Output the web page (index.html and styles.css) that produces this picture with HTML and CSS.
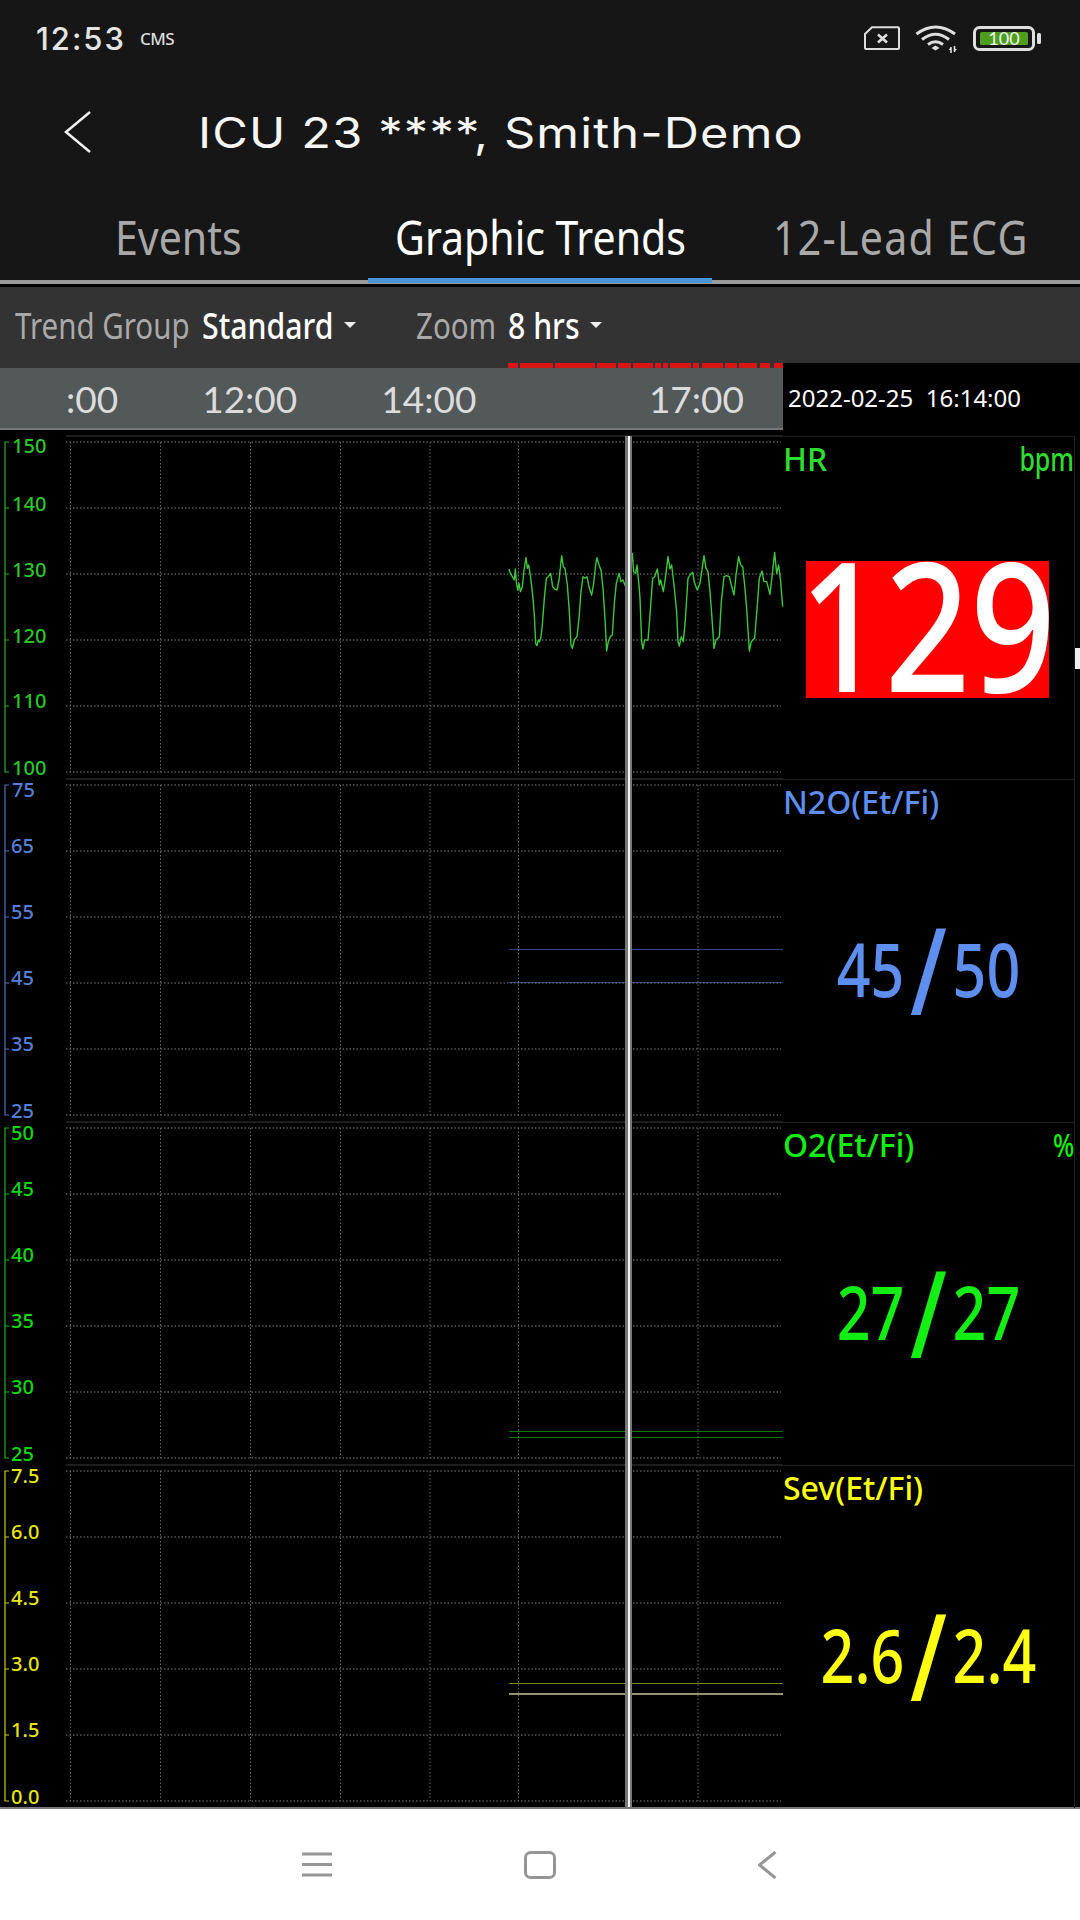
FILE: index.html
```html
<!DOCTYPE html>
<html lang="en">

<head>
    <meta charset="UTF-8">
    <meta name="viewport" content="width=device-width, initial-scale=1.0">
    <title>Graphic Trends</title>
    <link rel="stylesheet" href="styles.css">
</head>

<body>
    <div class="screen">
        <div class="status-bar">
            <span class="clock">12:53</span>
            <span class="carrier">CMS</span>
            <div class="status-icons">
                <svg width="36" height="24" viewBox="0 0 36 24" class="icon-line">
                    <path d="M8 1.2H34a1 1 0 0 1 1 1V22a1 1 0 0 1-1 1H2a1 1 0 0 1-1-1V8z" />
                    <path d="M14 8.5l9 8M23 8.5l-9 8" class="icon-x" />
                </svg>
                <svg width="43" height="29" viewBox="0 0 43 29" class="icon-line">
                    <path d="M1.5 10Q20.5-4 40 10" class="icon-wifi" />
                    <path d="M7 15.5Q20.5 5 34 15.5" class="icon-wifi" />
                    <path d="M13 20.5Q20.5 15 28 20.5" class="icon-wifi" />
                    <path d="M16.5 24l4-2.5 4 2.5-4 2.5z" class="icon-fill" />
                    <path d="M36 23v6M39.5 22v6" class="icon-arrows" />
                    <path d="M36 23l-2.5 3h2.500zM39.500 28l2.500-3h-2.500z" class="icon-fill" />
                </svg>
                <svg width="68" height="25" viewBox="0 0 68 25" class="icon-line">
                    <rect x="1.500" y="1.500" width="59" height="22" rx="5" class="icon-shell" />
                    <rect x="7" y="6" width="48" height="13" rx="1.500" class="battery-level" />
                    <text x="31" y="18.500" class="battery-text">100</text>
                    <rect x="64" y="7" width="4" height="11" rx="1.500" class="icon-fill" />
                </svg>
            </div>
        </div>

        <div class="app-header">
            <svg width="27" height="44" viewBox="0 0 27 44" class="back-icon">
                <path d="M26 2L2 22l24 20" />
            </svg>
            <h1 class="app-title">ICU 23 ****, Smith-Demo</h1>
        </div>

        <div class="tabs">
            <div class="tab tab-events"><span class="narrow">Events</span></div>
            <div class="tab tab-trends active"><span class="narrow">Graphic Trends</span></div>
            <div class="tab tab-ecg"><span class="narrow">12-Lead ECG</span></div>
        </div>

        <div class="toolbar">
            <div class="picker picker-group">
                <span class="picker-name narrow">Trend Group</span>
                <span class="picker-value narrow">Standard</span>
                <span class="caret"></span>
            </div>
            <div class="picker picker-zoom">
                <span class="picker-name narrow">Zoom</span>
                <span class="picker-value narrow">8 hrs</span>
                <span class="caret"></span>
            </div>
        </div>

        <div class="time-row">
            <div class="time-col">
                <div class="data-strip">
                    <svg width="275" height="5" viewBox="0 0 275 5" class="strip-bars">
                        <path d="M0 0h10v5H0zM12 0h33v5H12zM47 0h40v5H47zM89 0h19v5H89zM110 0h13v5H110zM125 0h20v5H125zM147 0h6v5H147zM155 0h5v5H155zM162 0h21v5H162zM185 0h6v5H185zM194 0h21v5H194zM217 0h12v5H217zM231 0h18v5H231zM252 0h10v5H252zM266 0h9v5H266z" />
                    </svg>
                </div>
                <div class="time-bar">
                    <span>:00</span>
                    <span>12:00</span>
                    <span>14:00</span>
                    <span class="time-last">17:00</span>
                </div>
            </div>
            <div class="cursor-time"><span>2022-02-25&nbsp; 16:14:00</span></div>
        </div>

        <div class="panels">
            <div class="panel panel-hr">
                <svg width="783" height="343" viewBox="0 0 783 343" class="chart">
                    <defs>
                        <g id="grid">
                            <path d="M66 0H783" class="chart-sep" />
                            <path d="M66 6H781M66 72H781M66 138H781M66 204H781M66 270H781M66 336H781" class="chart-grid" />
                            <path d="M70.500 6V336M160.500 6V336M250.500 6V336M340.500 6V336M430 6V336M518.500 6V336M698 6V336" class="chart-grid chart-grid-v" />
                            <path d="M9 6H5V336H9M5 72H9M5 138H9M5 204H9M5 270H9" class="chart-axis" />
                        </g>
                    </defs>
                    <use href="#grid" />
                    <text x="12" y="17" class="axis-text">150</text>
                    <text x="12" y="75" class="axis-text">140</text>
                    <text x="12" y="141" class="axis-text">130</text>
                    <text x="12" y="207" class="axis-text">120</text>
                    <text x="12" y="272" class="axis-text">110</text>
                    <text x="12" y="339" class="axis-text">100</text>
                    <g transform="translate(505 109) scale(.3333)">
                        <polyline class="hr-trace" points="12,72 16,85 22,95 28,105 31,72 34,110 38,135 42,115 46,140 52,125 57,75 63,38 67,70 71,60 76,90 82,140 88,210 92,295 96,302 100,285 104,290 108,275 112,240 118,160 124,100 130,95 137,85 143,125 150,133 156,135 162,105 170,32 175,65 180,70 187,120 193,200 198,300 202,310 208,285 216,275 222,220 228,140 234,95 240,100 246,95 252,125 260,150 266,115 272,60 276,38 282,60 288,75 294,130 300,220 305,318 310,290 316,275 322,270 328,175 334,115 342,85 348,110 354,105 362,125 368,145 374,95 382,25 386,80 392,85 396,60 402,120 405,160" />
                    </g>
                    <g transform="translate(640 109) scale(.3333)">
                        <polyline class="hr-trace" points="0,160 5,290 9,312 14,285 24,285 30,210 38,100 44,95 52,72 58,120 62,105 70,140 76,100 84,35 90,72 95,60 102,120 110,200 114,290 118,303 124,275 130,290 136,225 144,100 150,90 158,82 164,115 172,135 180,115 192,32 198,70 204,80 210,140 216,220 222,310 228,285 238,275 244,170 252,95 260,92 268,95 274,120 282,150 288,90 296,35 302,60 308,65 314,120 320,190 328,318 334,290 344,280 352,180 358,100 366,78 372,110 380,110 390,148 396,95 404,22 410,85 416,60 422,110 428,185" />
                    </g>
                </svg>
                <div class="readout">
                    <div class="readout-head"><span>HR</span><span class="unit">bpm</span></div>
                    <div class="alarm-box"><span class="alarm-value">129</span></div>
                    <div class="scroll-thumb"></div>
                </div>
            </div>

            <div class="panel panel-n2o">
                <svg width="783" height="343" viewBox="0 0 783 343" class="chart">
                    <use href="#grid" />
                    <text x="12" y="18" class="axis-text">75</text>
                    <text x="11" y="74" class="axis-text">65</text>
                    <text x="11" y="140" class="axis-text">55</text>
                    <text x="11" y="206" class="axis-text">45</text>
                    <text x="11" y="272" class="axis-text">35</text>
                    <text x="11" y="339" class="axis-text">25</text>
                    <path d="M509 170.500H783M509 203.500H783" class="trend-line" />
                </svg>
                <div class="readout">
                    <div class="readout-head"><span>N2O(Et/Fi)</span></div>
                    <div class="value"><span>45</span><span class="slash">/</span><span>50</span></div>
                </div>
            </div>

            <div class="panel panel-o2">
                <svg width="783" height="343" viewBox="0 0 783 343" class="chart">
                    <use href="#grid" />
                    <text x="11" y="18" class="axis-text">50</text>
                    <text x="11" y="74" class="axis-text">45</text>
                    <text x="11" y="140" class="axis-text">40</text>
                    <text x="11" y="206" class="axis-text">35</text>
                    <text x="11" y="272" class="axis-text">30</text>
                    <text x="11" y="339" class="axis-text">25</text>
                    <path d="M509 309.500H783M509 315.500H783" class="trend-line" />
                </svg>
                <div class="readout">
                    <div class="readout-head"><span>O2(Et/Fi)</span><span class="unit">%</span></div>
                    <div class="value"><span>27</span><span class="slash">/</span><span>27</span></div>
                </div>
            </div>

            <div class="panel panel-sev">
                <svg width="783" height="343" viewBox="0 0 783 343" class="chart">
                    <use href="#grid" />
                    <text x="11" y="18" class="axis-text">7.5</text>
                    <text x="11" y="74" class="axis-text">6.0</text>
                    <text x="11" y="140" class="axis-text">4.5</text>
                    <text x="11" y="206" class="axis-text">3.0</text>
                    <text x="11" y="272" class="axis-text">1.5</text>
                    <text x="11" y="339" class="axis-text">0.0</text>
                    <path d="M509 218.500H783" class="trend-line" />
                    <path d="M509 229H783" class="trend-line trend-line-fi" />
                </svg>
                <div class="readout">
                    <div class="readout-head"><span>Sev(Et/Fi)</span></div>
                    <div class="value"><span>2.6</span><span class="slash">/</span><span>2.4</span></div>
                </div>
            </div>

            <div class="cursor-line"></div>
        </div>

        <div class="nav-bar">
            <svg width="30" height="25" viewBox="0 0 30 25" class="nav-icon nav-menu">
                <path d="M0 2h30M0 12.500h30M0 23h30" />
            </svg>
            <svg width="32" height="28" viewBox="0 0 32 28" class="nav-icon nav-home">
                <rect x="1.500" y="1.500" width="29" height="25" rx="5" />
            </svg>
            <svg width="19" height="28" viewBox="0 0 19 28" class="nav-icon nav-back">
                <path d="M17.500 1L1.500 14l16 13" />
            </svg>
        </div>
    </div>
</body>

</html>
```

FILE: styles.css
```css
* {
    box-sizing: border-box;
}

body {
    margin: 0;
    font-family: "Noto Sans", sans-serif;
    background-color: #000;
}

.screen {
    display: flex;
    flex-direction: column;
    width: 1080px;
    height: 1920px;
    overflow: hidden;
}

.narrow {
    display: inline-block;
    white-space: nowrap;
    transform-origin: left center;
}

/* status bar */
.status-bar {
    display: flex;
    align-items: center;
    height: 66px;
    padding: 10px 39px 0 36px;
    background-color: #161616;
    color: #e4e4e4;
}

.clock {
    font-family: Inter, sans-serif;
    font-size: 31px;
    font-weight: 500;
    letter-spacing: 2px;
}

.carrier {
    margin-left: 14px;
    font-size: 17px;
    font-weight: 500;
    letter-spacing: -0.6px;
    color: #dcdcdc;
}

.status-icons {
    display: flex;
    align-items: center;
    gap: 15px;
    margin-left: auto;
}

.icon-line {
    fill: none;
    stroke: #dedede;
    stroke-width: 2;
}

.icon-x {
    stroke-width: 2.6;
}

.icon-wifi {
    stroke-width: 3;
}

.icon-arrows {
    stroke-width: 1.6;
}

.icon-shell {
    stroke-width: 3;
}

.icon-fill {
    fill: #dedede;
    stroke: none;
}

.battery-level {
    fill: #4c9e1c;
    stroke: none;
}

.battery-text {
    fill: #f2f2f2;
    stroke: none;
    font-family: Lato, sans-serif;
    font-size: 18px;
    text-anchor: middle;
}

/* title */
.app-header {
    display: flex;
    align-items: center;
    height: 132px;
    padding-left: 64px;
    background-color: #161616;
}

.back-icon {
    fill: none;
    stroke: #f2f2f2;
    stroke-width: 2.5;
}

.app-title {
    margin: 0 0 0 107px;
    font-family: Inter, sans-serif;
    font-size: 42px;
    font-weight: 400;
    letter-spacing: 1px;
    color: #f5f5f5;
    white-space: nowrap;
    transform: scaleX(1.16);
    transform-origin: left center;
}

/* tabs */
.tabs {
    display: flex;
    height: 86px;
    background-color: #161616;
    border-bottom: 4px solid #9a9a9a;
    margin-bottom: 3px;
}

.tab {
    position: relative;
    height: 82px;
    font-size: 48px;
    line-height: 78px;
    color: #a8a8a8;
}

.tab .narrow {
    transform: scaleX(.855);
}

.tab-events {
    width: 368px;
    padding-left: 115px;
}

.tab-trends {
    width: 344px;
    padding-left: 27px;
}

.tab-ecg {
    padding-left: 61px;
    letter-spacing: 1.5px;
}

.tab.active {
    color: #fff;
    border-bottom: 5px solid #4a94d8;
    height: 85px;
}

/* toolbar */
.toolbar {
    display: flex;
    height: 76px;
    background-color: #333;
}

.picker {
    display: flex;
    align-items: center;
    height: 100%;
    font-size: 36px;
}

.picker .narrow {
    transform: scaleX(.82);
}

.picker .picker-value {
    transform: scaleX(.84);
    font-weight: 500;
}

.picker-name {
    color: #a9a9a9;
}

.picker-value {
    color: #fff;
}

.picker-group {
    width: 416px;
    padding-left: 15px;
}

.picker-group .picker-name {
    width: 187px;
}

.picker-group .picker-value {
    width: 142px;
}

.picker-zoom .picker-name {
    width: 92px;
}

.picker-zoom .picker-value {
    width: 82px;
}

.caret {
    width: 0;
    height: 0;
    border-left: 6px solid transparent;
    border-right: 6px solid transparent;
    border-top: 6px solid #eee;
}

/* time axis */
.time-row {
    display: flex;
    height: 73px;
    background-color: #000;
}

.time-col {
    width: 783px;
}

.data-strip {
    display: flex;
    height: 5px;
    padding-left: 508px;
    background-color: #333;
}

.strip-bars {
    fill: #d81414;
}

.time-bar {
    display: flex;
    align-items: center;
    height: 62px;
    padding: 0 39px 0 66px;
    gap: 84px;
    background-color: #535859;
    border-bottom: 2px solid #777;
    font-family: Lato, sans-serif;
    font-size: 37px;
    color: #dcdcdc;
}

.time-last {
    margin-left: auto;
}

.cursor-time {
    padding: 19px 0 0 5px;
    font-size: 24px;
    line-height: 32px;
    color: #fff;
    white-space: nowrap;
}

/* panels */
.panels {
    position: relative;
    height: 1373px;
    background-color: #000;
    border-bottom: 2px solid #777;
}

.panel {
    display: flex;
    height: 343px;
}

.panel-hr {
    color: #2fdc2f;
}

.panel-n2o {
    color: #5e8eee;
}

.panel-o2 {
    color: #14ee14;
}

.panel-sev {
    color: #ffff14;
}

.chart {
    flex: none;
    display: block;
    overflow: visible;
}

.chart-sep {
    fill: none;
    stroke: #1e1e1e;
    stroke-width: 2;
}

.chart-grid {
    fill: none;
    stroke: #7e7e7e;
    stroke-width: 1;
    stroke-dasharray: 1.5 2;
}

.chart-grid-v {
    stroke: #666;
}

.chart-axis {
    fill: none;
    stroke: currentColor;
    stroke-width: 1.2;
    opacity: .8;
}

.axis-text {
    fill: currentColor;
    font-size: 20px;
    font-weight: 500;
    opacity: .9;
}

.hr-trace {
    fill: none;
    stroke: #3cc83c;
    stroke-width: 4.2;
    stroke-linejoin: round;
}

.trend-line {
    fill: none;
    stroke: currentColor;
    stroke-width: 1.2;
    opacity: .5;
}

.trend-line-fi {
    stroke: #a3a37a;
    stroke-width: 2;
    opacity: .9;
}

.readout {
    position: relative;
    flex: 1;
    border-top: 1px solid #1e1e1e;
    border-right: 1px solid #1e1e1e;
    margin-right: 5px;
}

.readout-head {
    display: flex;
    justify-content: space-between;
    height: 48px;
    font-size: 32px;
    font-weight: 500;
    line-height: 44px;
}

.unit {
    transform: scaleX(.78);
    transform-origin: right center;
}

.alarm-box {
    display: flex;
    align-items: center;
    justify-content: center;
    width: 243px;
    height: 137px;
    margin: 76px 0 0 23px;
    padding-bottom: 14px;
    background-color: #f00;
}

.alarm-value {
    font-size: 180px;
    font-weight: 500;
    line-height: 123px;
    color: #fff;
    transform: scaleX(.83);
}

.scroll-thumb {
    position: absolute;
    top: 211px;
    right: -6px;
    width: 5px;
    height: 21px;
    background-color: #eee;
}

.value {
    display: flex;
    align-items: center;
    justify-content: center;
    gap: 7px;
    height: 100px;
    margin-top: 91px;
    font-size: 74px;
    font-weight: 500;
    line-height: 100px;
    transform: scaleX(.8);
}

.slash {
    font-size: 120px;
}

.cursor-line {
    position: absolute;
    top: 0;
    bottom: 0;
    left: 625px;
    width: 7px;
    background: linear-gradient(to right, #777 3px, #f4f4f4 3px, #f4f4f4 4.5px, #777 4.5px);
}

/* bottom nav */
.nav-bar {
    display: flex;
    align-items: center;
    flex: 1;
    padding: 0 0 0 302px;
    background-color: #fff;
}

.nav-icon {
    fill: none;
    stroke: #969696;
    stroke-width: 3;
}

.nav-home {
    margin-left: 192px;
}

.nav-back {
    margin-left: 202px;
}
```
